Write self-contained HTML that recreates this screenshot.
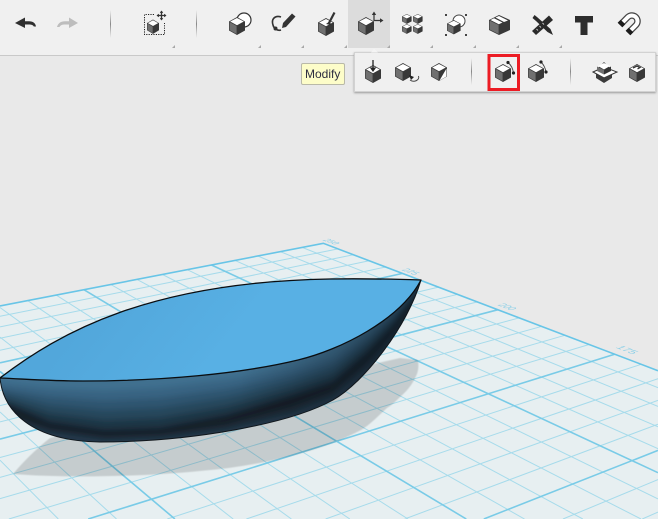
<!DOCTYPE html>
<html><head><meta charset="utf-8"><style>
html,body{margin:0;padding:0;width:658px;height:519px;overflow:hidden}
body{background:#e9e9e9;font-family:"Liberation Sans",sans-serif}
#wrap{position:absolute;left:0;top:0;width:658px;height:519px;overflow:hidden;background:#e9e9e9}
.top{position:absolute;left:0;top:0;display:block}
#bar{position:absolute;left:0;top:0;width:658px;height:55px;background:#f0f0f0;border-bottom:1.5px solid #c9c9c9}
#tip{position:absolute;left:301px;top:63px;width:39px;height:20px;background:#fdfdc9;border:1px solid #b9b9a8;border-radius:2px;font-size:12px;line-height:20px;color:#2d2d40;padding-left:3px}
#pop{position:absolute;left:354px;top:52px;width:300px;height:38px;background:#f0f0f0;border:1px solid #d2d2d2;box-shadow:0 1px 2px #999}
</style></head><body><div id="wrap">

<svg class="top" width="658" height="519" viewBox="0 0 658 519">
<defs>
<linearGradient id="dk" x1="240" x2="421" y1="0" y2="0" gradientUnits="userSpaceOnUse"><stop offset="0" stop-color="#0c161e" stop-opacity="0"/><stop offset=".55" stop-color="#0c161e" stop-opacity=".28"/><stop offset="1" stop-color="#0c161e" stop-opacity=".6"/></linearGradient>
<linearGradient id="topf" x1="100" y1="300" x2="200" y2="380" gradientUnits="userSpaceOnUse"><stop offset="0" stop-color="#52a7db"/><stop offset="1" stop-color="#58b0e4"/></linearGradient>
<clipPath id="hc"><path d="M0 378C3 410 30 441 100 442C190 442 290 424 333 400C365 382 408 325 421 280L300 300L0 378Z"/></clipPath>
<filter id="b2" filterUnits="userSpaceOnUse" x="-30" y="260" width="490" height="220"><feGaussianBlur stdDeviation="2.8"/></filter>
<filter id="b1" filterUnits="userSpaceOnUse" x="0" y="340" width="440" height="150"><feGaussianBlur stdDeviation=".6"/></filter>
</defs>

<path d="M323.300 243.300L658 370.700V519H0V306Z" fill="#e7eff1"/>
<path fill="none" stroke="#a6dbeb" stroke-width="1" d="M338.100 248.900L0 316.200M353.400 254.700L0 326.900M369.200 260.700L0 338.200M385.600 267L0 350.200M420.300 280.200L0 376.400M438.600 287.100L0 390.500M457.700 294.300L0 405.700M477.500 301.900L0 421.900M519.500 317.800L0 457.500M541.900 326.300L0 477.400M565.200 335.200L0 498.700M589.500 344.400L8.900 519M641.600 364.200L167.300 519M658 378.700L246.400 519M658 400.400L325.600 519M658 424.200L404.700 519M658 479.600L563 519M658 512.100L642.300 519M302.100 247.400L658 387.700M280.300 251.600L658 406.400M257.900 256L658 426.800M235 260.400L658 448.700M187.300 269.700L658 498.900M162.500 274.500L641 519M137 279.400L582.800 519M110.800 284.500L524.500 519M56.200 295.100L408 519M27.700 300.600L349.800 519M0 307.500L291.400 519M0 337.100L233.200 519M0 412L116.500 519M0 460.200L58.300 519"/>
<path fill="none" stroke="#79cbe7" stroke-width="1.600" d="M402.700 273.400L0 362.800M498.100 309.700L0 439.100M615 354.100L88.200 519M658 450.400L483.800 519M211.500 265L658 472.700M83.900 289.700L466.300 519M0 371.400L174.900 519"/>
<path fill="none" stroke="#68c5e7" stroke-width="1.600" d="M0 306L323.300 243.300L658 370.700"/>
<g font-family="Liberation Sans,sans-serif" font-size="10" fill="#86cee7">
<text transform="matrix(.75 .28 -.9 .22 322 240)">250</text>
<text transform="matrix(.8 .3 -.9 .28 401 270)">225</text>
<text transform="matrix(.85 .33 -.95 .3 497 305)">200</text>
<text transform="matrix(1.05 .4 -1 .32 615 347.500)">175</text>
</g>

<path d="M13 474C25 460 35 450 50 438L400 358L418 360C419 368 418 373 415 378C412 385 406 392 400 397C396 401 392 405 387 408C379 415 371 424 361 430C320 452 260 466 200 471C140 477 60 478 13 474Z" fill="#000" fill-opacity=".145" filter="url(#b1)"/>

<g clip-path="url(#hc)">
<g filter="url(#b2)">
<rect x="-20" y="270" width="470" height="190" fill="#3f6f8f"/>
<path fill="#376382" d="M-20 381L2 383L50 388.400L105 390.800L160 388L227 379.800L293 367L333 354.800L367 334.600L393 314.800L413 294L421 280L450 280V460H-20Z"/>
<path fill="#2f556f" d="M-20 385L4 389L50 396.800L105 400.600L160 398L227 388.600L293 374L333 361.600L367 339.200L393 317.600L413 295L421 280L450 280V460H-20Z"/>
<path fill="#27465b" d="M-20 389L6 394L50 405.200L105 410.400L160 408L227 397.400L293 381L333 368.400L367 343.800L393 320.400L413 296L421 280L450 280V460H-20Z"/>
<path fill="#1e3444" d="M-20 393L8 400L50 413.600L105 420.200L160 418L227 406.200L293 388L333 375.200L367 348.400L393 323.200L413 297L421 280L450 280V460H-20Z"/>
<path fill="#151e26" d="M-20 397L10 405L50 422L105 430L160 428L227 415L293 395L333 382L367 353L393 326L413 298L421 280L450 280V460H-20Z"/>
<path fill="#1a2a36" d="M-20 410L20 418L50 428.500L105 436L160 434L227 424L293 406L333 391L367 361.500L393 332L413 303L421 280L450 280V460H-20Z"/>
<path fill="#20394b" d="M-20 420L25 424L50 432L105 439.600L160 437.600L227 429.400L293 412.600L333 396.400L367 366.600L393 335.600L413 306L421 280L450 280V460H-20Z"/>
</g>
<rect x="240" y="270" width="190" height="180" fill="url(#dk)"/>
</g>
<path d="M0 378C3 410 30 441 100 442C190 442 290 424 333 400C365 382 408 325 421 280" fill="none" stroke="#10161b" stroke-width="1"/>
<path d="M0 378C60 332 150 282 330 279C360 278.500 390 279 421 280C400 320 340 350 298 360C240 374 160 381 83 381C50 381 25 379 0 378Z" fill="url(#topf)" stroke="#0a0d10" stroke-width="1.300" stroke-linejoin="round"/>
</svg>

<div id="bar"></div>
<div style="position:absolute;left:348px;top:0;width:42px;height:48px;background:#dcdcdc"></div>
<div id="pop"></div>
<div id="tip">Modify</div>

<svg class="top" width="658" height="519" viewBox="0 0 658 519">
<defs>
<g id="c"><path d="M8 0L16 4.500V13.500L8 18L0 13.500V4.500Z" fill="#383838"/><path d="M.6 5L7.600 9V17L.6 13.100Z" fill="#707070"/><path d="M8 1L14.800 4.500L8 8.200L1.200 4.500Z" fill="#fff"/></g>
<linearGradient id="sep" x1="0" x2="0" y1="0" y2="1"><stop offset="0" stop-color="#999" stop-opacity="0"/><stop offset=".5" stop-color="#888"/><stop offset="1" stop-color="#999" stop-opacity="0"/></linearGradient>
</defs>
<path d="M371 52.500L374 48.500L378 52.500Z" fill="#f4f4f4"/>
<g fill="url(#sep)"><rect x="110" y="10" width="1" height="28"/><rect x="196" y="10" width="1" height="28"/><rect x="471" y="58" width="1" height="27"/><rect x="570" y="58" width="1" height="27"/></g>
<g fill="#a8a8a8"><path d="M175 45V48H172Z"/><path d="M261 45V48H258Z"/><path d="M304 45V48H301Z"/><path d="M347 45V48H344Z"/><path d="M390 45V48H387Z"/><path d="M433 45V48H430Z"/><path d="M476 45V48H473Z"/><path d="M519 45V48H516Z"/><path d="M562 45V48H559Z"/></g>
<path d="M15 23L25 17.500V21.200H29C33 21.200 35.500 23 36 26.500L33.800 26.500C33 25 31.500 24.500 29 24.500H25V28Z" fill="#2f2f2f"/>
<path d="M78 23L69 17.500V21.200H65C61 21.200 58 23 57 27L59.500 27C60.500 25 62.500 24.500 65 24.500H69V28Z" fill="#bdbdbd"/>
<path d="M154 14.500H144.500V34.500H164.500V23" fill="none" stroke="#222" stroke-width="1" stroke-dasharray="1.200 1.200"/>
<use href="#c" transform="translate(147,19.500) scale(.75,.8)"/>
<path d="M161.500 11V20M157 15.500H166" stroke="#333" stroke-width="1.300"/><path d="M161.500 10.500L159.800 13H163.200ZM161.500 20.500L159.800 18H163.200ZM156.500 15.500L159 13.800V17.200ZM166.500 15.500L164 13.800V17.200Z" fill="#333"/>
<circle cx="244" cy="20" r="7" fill="#fff" stroke="#333" stroke-width="1.200"/><use href="#c" x="229" y="17"/>
<path d="M281 17C275 15 271 19 273 25C274 29 278 31 281 30" fill="none" stroke="#333" stroke-width="1.600"/><circle cx="275.500" cy="28.500" r="2" fill="#333"/><path d="M283 23L292 13.500L295.500 16.500L286 27L282 28Z" fill="#333"/>
<use href="#c" x="318" y="18"/><path d="M329 23L334.500 12.500" stroke="#333" stroke-width="2.200"/><path d="M326 24L330 21L331 25Z" fill="#333"/>
<use href="#c" x="358" y="17"/><path d="M374 13V20.500H382" fill="none" stroke="#333" stroke-width="1.200"/><path d="M374 11.500L371.800 15H376.200ZM383.500 20.500L380 18.300V22.700Z" fill="#333"/>
<use href="#c" transform="translate(402,14) scale(.6,.55)"/><use href="#c" transform="translate(413,14) scale(.6,.55)"/><use href="#c" transform="translate(402,24) scale(.6,.55)"/><use href="#c" transform="translate(413,24) scale(.6,.55)"/>
<circle cx="459" cy="21" r="6" fill="#fff" stroke="#444" stroke-width="1"/><use href="#c" transform="translate(447,20) scale(.85,.8)"/><g fill="#444"><rect x="445" y="14" width="2" height="2"/><rect x="465" y="14" width="2" height="2"/><rect x="445" y="34" width="2" height="2"/><rect x="465" y="34" width="2" height="2"/></g>
<path d="M499 15L510 20V30L499 35L489 30V20Z" fill="#383838"/><path d="M489.600 20.500L498.600 25V34L489.600 29.500Z" fill="#707070"/><path d="M490.500 20L494 18.200L502.500 22.500L498.800 24.300Z" fill="#fff"/><path d="M495.500 17.500L499 16L508 20.500L504 22Z" fill="#fff"/>
<path d="M532 31L549 15.500L553 20L536 35Z" fill="#2b2b2b"/><path d="M537 17L534.500 15L532.500 18L536 21L547.500 32L553 35L550.500 29Z" fill="#2b2b2b"/><path d="M538 30.500L536.500 29M541 27.500L539.500 26M544 24.500L542.500 23" stroke="#eee" stroke-width=".8"/>
<path d="M575 16H593V22.500H587.500V35H580.500V22.500H575Z" fill="#2d2d2d"/>
<path d="M620 25L628 17A5.660 5.660 0 0 1 636 25L628 33" fill="none" stroke="#444" stroke-width="6.500"/><path d="M622.500 22.500L628 17A5.660 5.660 0 0 1 636 25L630.500 30.500" fill="none" stroke="#fff" stroke-width="4"/><path d="M620 25L623 22M628 33L631 30" stroke="#1c1c1c" stroke-width="6.500"/>
<use href="#c" x="365" y="65"/><path d="M373 60V69" stroke="#222" stroke-width="1.300"/><path d="M373 72L369.800 67.500H376.200Z" fill="#222"/>
<use href="#c" x="395" y="63"/><path d="M410 80C414 83 420 80 418.500 76" fill="none" stroke="#444" stroke-width="1"/><path d="M409 75L414 77L411 80Z" fill="#222"/>
<use href="#c" x="431" y="63"/><path d="M446.500 68.500V76.500L439.500 80.500Z" fill="#fff"/>
<rect x="489" y="55.500" width="29.500" height="34" fill="none" stroke="#ec1c24" stroke-width="3"/>
<use href="#c" x="495" y="64"/><path d="M508 62.500C511 65 513 69 513.500 73" fill="none" stroke="#444" stroke-width=".9"/><circle cx="508" cy="62.500" r="1.600" fill="#222"/><circle cx="513.500" cy="73" r="1.600" fill="#222"/>
<use href="#c" x="528" y="64"/><path d="M541 62C544 65 545.500 69 546 72" fill="none" stroke="#444" stroke-width=".9"/><circle cx="541" cy="62" r="1.600" fill="#222"/><circle cx="546" cy="72" r="1.600" fill="#222"/>
<path d="M593 72L604 67L617 72L604 78Z" fill="#fff" stroke="#333" stroke-width="1"/><path d="M596 74L604 78L612 74V78L604 83L596 78Z" fill="#3b3b3b"/><path d="M597 69L604 62L611 69L604 73Z" fill="#333"/><path d="M604 63L610 66L604 69.500L598 66Z" fill="#fff"/><path d="M597 66.500L604 70V74.500L597 71Z" fill="#707070"/><path d="M611 66.500L604 70V74.500L611 71Z" fill="#333"/>
<use href="#c" x="629" y="64"/><path d="M633 68L637 66L640 67.500L637.500 69" fill="none" stroke="#333" stroke-width="1.300"/>
</svg>
</div></body></html>
